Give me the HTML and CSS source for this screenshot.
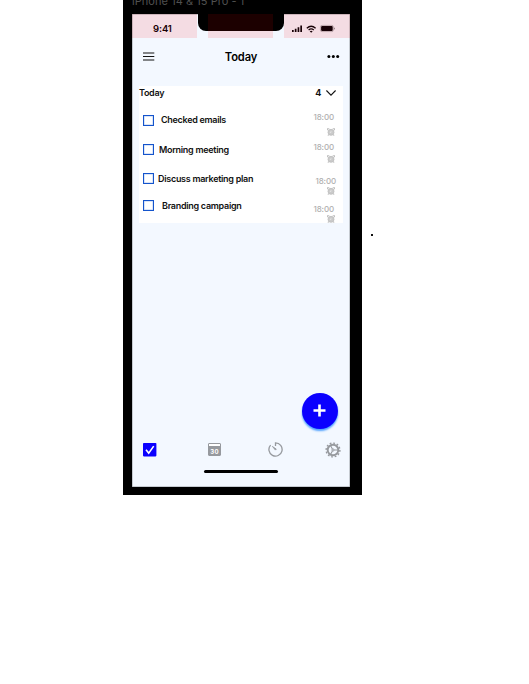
FILE: index.html
```html
<!DOCTYPE html>
<html lang="en">
<head>
<meta charset="utf-8">
<title>Today</title>
<link rel="stylesheet" href="styles.css">
</head>
<body>
<svg width="0" height="0" class="defs">
  <symbol id="alarm" viewBox="0 0 8 8">
    <circle cx="4" cy="4.3" r="3" fill="#cacaca" stroke="#c0c0c0" stroke-width=".9"/>
    <path d="M.5 2.2V.7h1.8M7.5 2.2V.7H5.7M1.7 6.5.9 7.6M6.3 6.5l.8 1.1" fill="none" stroke="#c0c0c0" stroke-width="1.1"/>
    <path d="M4 2.9v1.6H2.8" fill="none" stroke="#fff" stroke-width=".4"/>
  </symbol>
</svg>
<main class="board">
  <div class="device">
    <div class="frame-label">iPhone 14 &amp; 15 Pro - 1</div>
    <div class="screen">
      <div class="notch"></div>
      <div class="status">
        <div class="column"><span class="clock">9:41</span></div>
        <div class="column"></div>
        <div class="column signals">
          <svg width="44" height="10" viewBox="0 0 44 10" fill="#180006">
            <path d="M0 6h1.7v2H0zM2.8 4.8h1.7V8H2.8zM5.6 3.2h1.7V8H5.6zM8.3 1.5H10V8H8.3z"/>
            <path d="M14.8 4.2Q19.2.2 23.6 4.2M16.6 5.9q2.6-2.2 5.2 0" fill="none" stroke="#180006" stroke-width="1.3"/>
            <path d="m17.7 7.2 1.5 1.5 1.5-1.5q-1.5-1.1-3 0z"/>
            <rect x="28.4" y="1.4" width="13" height="6.2" rx="1.6" fill="none" stroke="#180006" stroke-opacity=".4" stroke-width=".6"/>
            <rect x="29.1" y="2.1" width="11.6" height="4.9" rx="1"/>
            <rect x="42" y="3.5" width=".8" height="2" rx=".4" opacity=".5"/>
          </svg>
        </div>
      </div>
      <header class="topbar">
        <svg width="12" height="9" viewBox="0 0 12 9"><path d="M0 1h11.3M0 4.5h11.3M0 8h11.3" stroke="#111" stroke-width="1"/></svg>
        <h1>Today</h1>
        <svg width="13" height="5" viewBox="0 0 13 5"><circle cx="1.9" cy="2.5" r="1.5"/><circle cx="6.3" cy="2.5" r="1.5"/><circle cx="10.7" cy="2.5" r="1.5"/></svg>
      </header>
      <section class="panel">
        <div class="panel-head">
          <span>Today</span>
          <span class="count">4</span>
          <svg width="10" height="6" viewBox="0 0 10 6"><path d="m.4.5 4.6 4.6L9.6.5" fill="none" stroke="#111" stroke-width="1.1"/></svg>
        </div>
        <div class="task emails"><i class="box"></i><span class="name">Checked emails</span><div class="when"><span>18:00</span><svg><use href="#alarm"/></svg></div></div>
        <div class="task meeting"><i class="box"></i><span class="name">Morning meeting</span><div class="when"><span>18:00</span><svg><use href="#alarm"/></svg></div></div>
        <div class="task plan"><i class="box"></i><span class="name">Discuss marketing plan</span><div class="when"><span>18:00</span><svg><use href="#alarm"/></svg></div></div>
        <div class="task campaign"><i class="box"></i><span class="name">Branding campaign</span><div class="when"><span>18:00</span><svg><use href="#alarm"/></svg></div></div>
      </section>
      <button class="add" aria-label="Add task"><svg width="14" height="14" viewBox="0 0 14 14"><path d="M6.5.5v12M.5 6.5h12" stroke="#fff" stroke-width="2.6"/></svg></button>
      <nav class="tabs">
        <svg width="14" height="14" viewBox="0 0 14 14"><rect x="0" y="0" width="13.4" height="13.4" rx=".8" fill="#0b00ff"/><path d="m3 6.8 2.7 3.3 5-7" fill="none" stroke="#fff" stroke-width="1.6"/></svg>
        <div class="calendar"><span>30</span></div>
        <svg class="timer" width="15" height="15" viewBox="0 0 15 15" fill="none" stroke="#96999e" stroke-width="1.3"><path d="M7.5 4V.9a6.6 6.6 0 1 1-4.9 2.2"/><path d="m4.4 4.4 3.9 2.7-.9 1z" fill="#96999e" stroke-width=".8"/></svg>
        <svg class="gear" width="16" height="16" viewBox="0 0 16 16" fill="none" stroke="#96999e"><circle cx="8" cy="8" r="5.3" stroke-width="1.9"/><circle cx="8" cy="8" r="6.9" stroke-width="1.4" stroke-dasharray="1.8 1.8127"/><circle cx="8" cy="8" r="1.1" stroke-width="1"/><path d="M9.2 8h4M7.4 7 5.5 3.6M7.4 9l-1.9 3.4" stroke-width="1.1"/></svg>
      </nav>
      <div class="home"></div>
    </div>
  </div>
  <span class="dot"></span>
</main>
</body>
</html>
```
FILE: styles.css
```css
* { box-sizing: border-box; }
body { margin: 0; background: #fff; font-family: Inter, "Liberation Sans", sans-serif; color: #111; overflow: hidden; }
svg { display: block; flex: none; }
.defs { position: absolute; }
.board { display: flex; height: 684px; padding-left: 123px; }
.device { width: 239px; height: 495px; padding: 0 12px 8px 9px; background: #000; }
.frame-label { height: 14px; overflow: hidden; font-size: 11px; line-height: 14px; letter-spacing: .05px; color: #505050; white-space: nowrap; }
.frame-label::before { content: ""; display: block; margin-top: -6px; }
.screen { position: relative; display: flex; flex-direction: column; height: 473px; background: #f3f8ff; box-shadow: inset 0 0 0 .5px #9a9da3; }
.notch { position: absolute; left: 66px; top: 0; width: 86px; height: 17px; background: #000; border-radius: 0 0 8px 8px; }
.status { position: relative; display: grid; grid-template-columns: 65px 65px 66px; column-gap: 11px; height: 24px; }
.column { background: rgba(255, 0, 0, .11); }
.clock { display: block; padding: 8px 0 0 21px; font-size: 9.5px; line-height: 13px; font-weight: 600; letter-spacing: -.1px; color: #180006; }
.signals { padding: 10px 0 0 8px; }
.topbar { display: flex; align-items: center; justify-content: space-between; height: 37px; padding: 0 10px 0 11px; }
.topbar svg:first-child { margin-top: -1px; }
h1 { margin: 0; font-size: 11.2px; line-height: 14px; font-weight: 600; letter-spacing: -.15px; color: #000; }
.panel { height: 137px; margin: 11px 7px 0; background: #fff; }
.panel-head { display: flex; align-items: center; height: 14px; padding: 0 7px 0 0; font-size: 9px; line-height: 14px; font-weight: 600; letter-spacing: -.3px; }
.count { margin: 0 5px 0 auto; font-weight: 700; }
.task { display: flex; align-items: flex-start; height: 28px; padding: 0 7px 0 4px; }
.box { width: 11px; height: 11px; border: 1px solid #1454cc; box-shadow: inset 0 0 0 .5px #b5cbf2; flex: none; }
.name { font-size: 9px; line-height: 11px; font-weight: 600; letter-spacing: -.29px; white-space: nowrap; }
.when { margin-left: auto; display: flex; flex-direction: column; align-items: flex-end; font-size: 8px; line-height: 10px; font-weight: 500; letter-spacing: -.12px; color: #b0b0b0; }
.when svg { width: 8px; height: 8px; margin-right: 1px; }
.emails { height: 39px; padding-top: 15px; }
.emails .box { margin-top: -.5px; }
.emails .name { margin: -1px 0 0 7px; }
.emails .when { margin: -3px 2px 0 auto; }
.emails .when svg { margin: 6px -1px 0 0; }
.meeting { padding-top: 5px; }
.meeting .name { margin-left: 5px; }
.meeting .when { margin: -2px 2px 0 auto; }
.meeting .when svg { margin: 3px -1px 0 0; }
.plan { padding-top: 6px; }
.plan .name { margin: 0 0 0 4px; }
.plan .when { margin-top: 3px; }
.plan .when svg { margin-top: 1px; }
.campaign { padding-top: 5px; }
.campaign .name { margin-left: 8px; }
.campaign .when { margin: 4px 2px 0 auto; }
.campaign .when svg { margin: 1px -1px 0 0; }
.add { align-self: flex-end; display: grid; place-items: center; width: 36px; height: 36px; margin: auto 12px 13px 0; padding: 0; border: 0; border-radius: 50%; background: #0b00ff; box-shadow: 0 2px 2px #4da0ff; }
.tabs { display: flex; align-items: center; height: 16px; margin-bottom: 12px; padding-left: 11px; }
.tabs .timer, .tabs .gear { margin-top: -1px; }
.calendar { width: 13px; height: 13px; margin: -1px 0 0 51px; padding-top: 4px; border: 1px solid #96999e; border-radius: 1px; background: linear-gradient(#fff 2px, #96999e 2px); color: #fff; font-size: 6px; line-height: 7px; font-weight: 700; letter-spacing: .4px; text-align: center; }
.timer { margin-left: 47px; }
.gear { margin-left: 42px; }
.home { width: 74px; height: 3px; margin: 0 0 14px 72px; border-radius: 2px; background: #000; }
.dot { width: 2px; height: 2px; margin: 234px 0 0 9px; background: #111; }
```
